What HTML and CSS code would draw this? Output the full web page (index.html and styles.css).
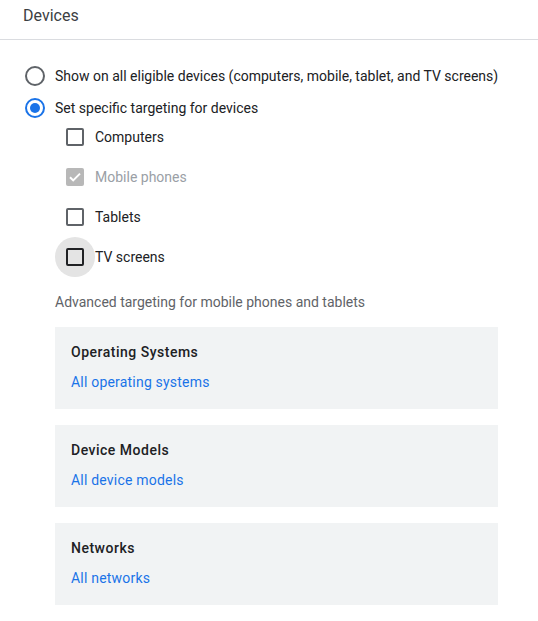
FILE: index.html
```html
<!DOCTYPE html>
<html lang="en">
<head>
    <meta charset="UTF-8">
    <meta name="viewport" content="width=device-width, initial-scale=1.0">
    <title>Devices</title>
    <link rel="stylesheet" href="styles.css">
</head>
<body>
    <div class="panel-header">Devices</div>

    <div class="panel-body">
        <div class="radio-group">
            <label class="radio-row">
                <span class="radio"></span>
                <span>Show on all eligible devices (computers, mobile, tablet, and TV screens)</span>
            </label>
            <label class="radio-row">
                <span class="radio checked"></span>
                <span>Set specific targeting for devices</span>
            </label>
        </div>

        <div class="checkbox-list">
            <label class="checkbox-row">
                <span class="checkbox"></span>
                <span>Computers</span>
            </label>
            <label class="checkbox-row disabled">
                <span class="checkbox checked">
                    <svg viewBox="0 0 18 18" width="18" height="18">
                        <path d="M4 9.2l3.2 3.2L14 5.6" fill="none" stroke="#fff" stroke-width="2"/>
                    </svg>
                </span>
                <span>Mobile phones</span>
            </label>
            <label class="checkbox-row">
                <span class="checkbox"></span>
                <span>Tablets</span>
            </label>
            <label class="checkbox-row focused">
                <span class="checkbox"></span>
                <span>TV screens</span>
            </label>
        </div>

        <div class="advanced-label">Advanced targeting for mobile phones and tablets</div>

        <div class="card-list">
            <div class="card">
                <div class="card-title">Operating Systems</div>
                <a class="card-link" href="#">All operating systems</a>
            </div>
            <div class="card">
                <div class="card-title">Device Models</div>
                <a class="card-link" href="#">All device models</a>
            </div>
            <div class="card">
                <div class="card-title">Networks</div>
                <a class="card-link" href="#">All networks</a>
            </div>
        </div>
    </div>
</body>
</html>
```

FILE: styles.css
```css
:root {
    --text-color: #202124;
    --header-color: #3c4043;
    --muted-color: #5f6368;
    --disabled-color: #9aa0a6;
    --divider-color: #dadce0;
    --blue: #1a73e8;
    --card-background: #f1f3f4;
}

body {
    margin: 0;
    font-family: Roboto, "Liberation Sans", Arial, sans-serif;
    font-size: 14px;
    color: var(--text-color);
    background-color: #fff;
}

.panel-header {
    height: 40px;
    padding-left: 23px;
    box-sizing: border-box;
    padding-top: 5px;
    line-height: 22px;
    font-size: 16px;
    color: var(--header-color);
    border-bottom: 1px solid var(--divider-color);
}

.panel-body {
    padding: 24px 40px 0 25px;
}

.radio-group {
    display: flex;
    flex-direction: column;
    gap: 8px;
}

.radio-row {
    display: flex;
    align-items: center;
    gap: 10px;
    height: 24px;
    line-height: 20px;
    white-space: nowrap;
}

.radio {
    width: 20px;
    height: 20px;
    box-sizing: border-box;
    border: 2px solid var(--muted-color);
    border-radius: 50%;
    display: flex;
    justify-content: center;
    align-items: center;
    flex-shrink: 0;
}

.radio.checked {
    border-color: var(--blue);
}

.radio.checked::after {
    content: "";
    width: 10px;
    height: 10px;
    border-radius: 50%;
    background-color: var(--blue);
}

.checkbox-list {
    display: flex;
    flex-direction: column;
    gap: 8px;
    margin-top: 1px;
    padding-left: 41px;
}

.checkbox-row {
    display: flex;
    align-items: center;
    gap: 11px;
    height: 32px;
    line-height: 20px;
}

.checkbox {
    position: relative;
    width: 18px;
    height: 18px;
    box-sizing: border-box;
    border: 2px solid var(--muted-color);
    border-radius: 2px;
    flex-shrink: 0;
}

.checkbox.checked {
    border: none;
    background-color: #b8b8b8;
}

.checkbox svg {
    display: block;
}

.checkbox-row.disabled {
    color: var(--disabled-color);
}

.checkbox-row.focused .checkbox {
    border-color: var(--text-color);
}

/* hover ripple behind the focused box */
.checkbox-row.focused .checkbox::before {
    content: "";
    position: absolute;
    left: 50%;
    top: 50%;
    width: 40px;
    height: 40px;
    margin: -20px 0 0 -20px;
    border-radius: 50%;
    background-color: rgba(32, 33, 36, 0.12);
    z-index: -1;
}

.advanced-label {
    margin-top: 19px;
    padding-left: 30px;
    line-height: 20px;
    color: var(--muted-color);
}

.card-list {
    display: flex;
    flex-direction: column;
    gap: 16px;
    margin-top: 15px;
    margin-left: 30px;
}

.card {
    height: 82px;
    box-sizing: border-box;
    padding: 15px 16px;
    background-color: var(--card-background);
}

.card-title {
    font-weight: 500;
    line-height: 20px;
    letter-spacing: 0.5px;
}

.card-link {
    display: block;
    margin-top: 10px;
    line-height: 20px;
    color: var(--blue);
    text-decoration: none;
    letter-spacing: 0.2px;
}
```
